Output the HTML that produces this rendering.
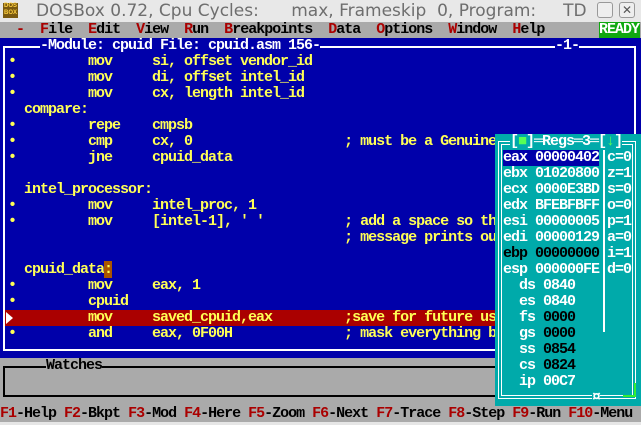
<!DOCTYPE html>
<html><head><meta charset="utf-8"><style>
body{margin:0;width:641px;height:425px;overflow:hidden;background:#e6e6e6;position:relative;font-family:"Liberation Mono",monospace;}
.t{position:absolute;font-family:"Liberation Mono",monospace;font-weight:bold;font-size:15px;letter-spacing:-1px;line-height:16px;height:16px;white-space:pre;}
.y{color:#ffff55}.w{color:#fff}.k{color:#000}.r{color:#aa0000}
.ln{position:absolute;background:#fff}
</style></head><body>
<!-- title bar -->
<div style="position:absolute;left:0;top:0;width:641px;height:22px;background:#e8e8e8"></div>
<div style="position:absolute;left:3px;top:3px;width:15px;height:15px;background:#7a5a10;color:#ffd040;font:bold 6px 'Liberation Sans',sans-serif;line-height:7px;text-align:center">DOS<br>BOX</div>
<div style="position:absolute;left:36px;top:0;font:17px 'DejaVu Sans',sans-serif;color:#6e6e6e;white-space:pre;line-height:22px">DOSBox 0.72, Cpu Cycles:      max, Frameskip  0, Program:     TD</div>
<div style="position:absolute;left:597px;top:2px;width:14px;height:14px;border:1px solid #999;border-radius:3px;background:#eee"></div>
<div style="position:absolute;left:619px;top:2px;width:14px;height:14px;border:1px solid #999;border-radius:3px;background:#eee;font:12px sans-serif;color:#555;text-align:center;line-height:14px">✕</div>
<!-- menu -->
<div style="position:absolute;left:0;top:22px;width:641px;height:16px;background:#aaaaaa"></div>
<div class="t k" style="left:0;top:22px">  <span class="r">-</span>  <span class="r">F</span>ile  <span class="r">E</span>dit  <span class="r">V</span>iew  <span class="r">R</span>un  <span class="r">B</span>reakpoints  <span class="r">D</span>ata  <span class="r">O</span>ptions  <span class="r">W</span>indow  <span class="r">H</span>elp</div>
<div class="t w" style="left:599px;top:22px;width:41px;background:#10a810">READY</div>
<!-- main blue -->
<div style="position:absolute;left:0;top:38px;width:641px;height:320px;background:#0000aa"></div>
<div class="ln" style="left:3px;top:46px;width:2px;height:305px"></div>
<div class="ln" style="left:3px;top:46px;width:633px;height:2px"></div>
<div class="ln" style="left:634px;top:46px;width:2px;height:305px"></div>
<div class="ln" style="left:3px;top:349px;width:633px;height:2px"></div>
<div class="t w" style="left:40px;top:38px;background:#0000aa">-Module: cpuid File: cpuid.asm 156-</div>
<div class="t w" style="left:555px;top:38px;background:#0000aa">-1-</div>
<div style="position:absolute;left:5px;top:310px;width:629px;height:16px;background:#aa0000"></div>
<div class="t y" style="left:0;top:54px"> •         mov     si, offset vendor_id</div>
<div class="t y" style="left:0;top:70px"> •         mov     di, offset intel_id</div>
<div class="t y" style="left:0;top:86px"> •         mov     cx, length intel_id</div>
<div class="t y" style="left:0;top:102px">   compare:</div>
<div class="t y" style="left:0;top:118px"> •         repe    cmpsb</div>
<div class="t y" style="left:0;top:134px"> •         cmp     cx, 0                   ; must be a Genuine</div>
<div class="t y" style="left:0;top:150px"> •         jne     cpuid_data</div>
<div class="t y" style="left:0;top:182px">   intel_processor:</div>
<div class="t y" style="left:0;top:198px"> •         mov     intel_proc, 1</div>
<div class="t y" style="left:0;top:214px"> •         mov     [intel-1], ' '          ; add a space so th</div>
<div class="t y" style="left:0;top:230px">                                           ; message prints ou</div>
<div class="t y" style="left:0;top:262px">   cpuid_data<span style="background:#aa5500">:</span></div>
<div class="t y" style="left:0;top:278px"> •         mov     eax, 1</div>
<div class="t y" style="left:0;top:294px"> •         cpuid</div>
<div class="t y" style="left:0;top:310px">           mov     saved_cpuid,eax         ;save for future us</div>
<svg style="position:absolute;left:6px;top:312px" width="8" height="12"><path d="M0 0 L7 6 L0 12 Z" fill="#fff"/></svg>
<div class="t y" style="left:0;top:326px"> •         and     eax, 0F00H              ; mask everything b</div>
<!-- watches -->
<div style="position:absolute;left:0;top:358px;width:641px;height:64px;background:#aaaaaa"></div>
<div style="position:absolute;left:3px;top:366px;width:640px;height:31px;border:2px solid #000;border-right:none;box-sizing:border-box"></div>
<div class="t k" style="left:46px;top:358px;background:#aaaaaa">Watches</div>
<div class="t k" style="left:0;top:406px"><span class="r">F1</span>-Help <span class="r">F2</span>-Bkpt <span class="r">F3</span>-Mod <span class="r">F4</span>-Here <span class="r">F5</span>-Zoom <span class="r">F6</span>-Next <span class="r">F7</span>-Trace <span class="r">F8</span>-Step <span class="r">F9</span>-Run <span class="r">F10</span>-Menu</div>
<!-- regs window -->
<div style="position:absolute;left:495px;top:134px;width:146px;height:272px;background:#00aaaa"></div>
<div style="position:absolute;left:498px;top:141px;width:138px;height:258px;border:1px solid #fff;box-sizing:border-box"></div>
<div style="position:absolute;left:501px;top:144px;width:132px;height:252px;border:1px solid #fff;box-sizing:border-box"></div>
<div class="ln" style="left:603px;top:150px;width:2px;height:182px"></div>
<div class="ln" style="left:623px;top:395px;width:13px;height:2px;background:#33ee33"></div>
<div class="ln" style="left:634px;top:383px;width:2px;height:14px;background:#33ee33"></div>
<div class="t w" style="left:510px;top:134px;background:#00aaaa">[<span style="color:#55ff55">■</span>]═Regs═3═[<span style="color:#55ff55">↓</span>]</div>
<div class="t w" style="left:592px;top:390px;background:#00aaaa">¤</div>
<div class="t w" style="left:503px;top:150px;width:96px;background:#0000aa">eax 00000402</div>
<div class="t w" style="left:503px;top:166px">ebx 01020800</div>
<div class="t w" style="left:503px;top:182px">ecx 0000E3BD</div>
<div class="t w" style="left:503px;top:198px">edx BFEBFBFF</div>
<div class="t w" style="left:503px;top:214px">esi 00000005</div>
<div class="t w" style="left:503px;top:230px">edi 00000129</div>
<div class="t k" style="left:503px;top:246px">ebp 00000000</div>
<div class="t w" style="left:503px;top:262px">esp 000000FE</div>
<div class="t w" style="left:607px;top:150px">c=0</div>
<div class="t w" style="left:607px;top:166px">z=1</div>
<div class="t w" style="left:607px;top:182px">s=0</div>
<div class="t w" style="left:607px;top:198px">o=0</div>
<div class="t w" style="left:607px;top:214px">p=1</div>
<div class="t w" style="left:607px;top:230px">a=0</div>
<div class="t w" style="left:607px;top:246px">i=1</div>
<div class="t w" style="left:607px;top:262px">d=0</div>
<div class="t w" style="left:519px;top:278px">ds 0840</div>
<div class="t w" style="left:519px;top:294px">es 0840</div>
<div class="t w" style="left:519px;top:310px">fs <span class="k">0000</span></div>
<div class="t w" style="left:519px;top:326px">gs <span class="k">0000</span></div>
<div class="t w" style="left:519px;top:342px">ss <span class="k">0854</span></div>
<div class="t w" style="left:519px;top:358px">cs <span class="k">0824</span></div>
<div class="t w" style="left:519px;top:374px">ip 00C7</div>
</body></html>
